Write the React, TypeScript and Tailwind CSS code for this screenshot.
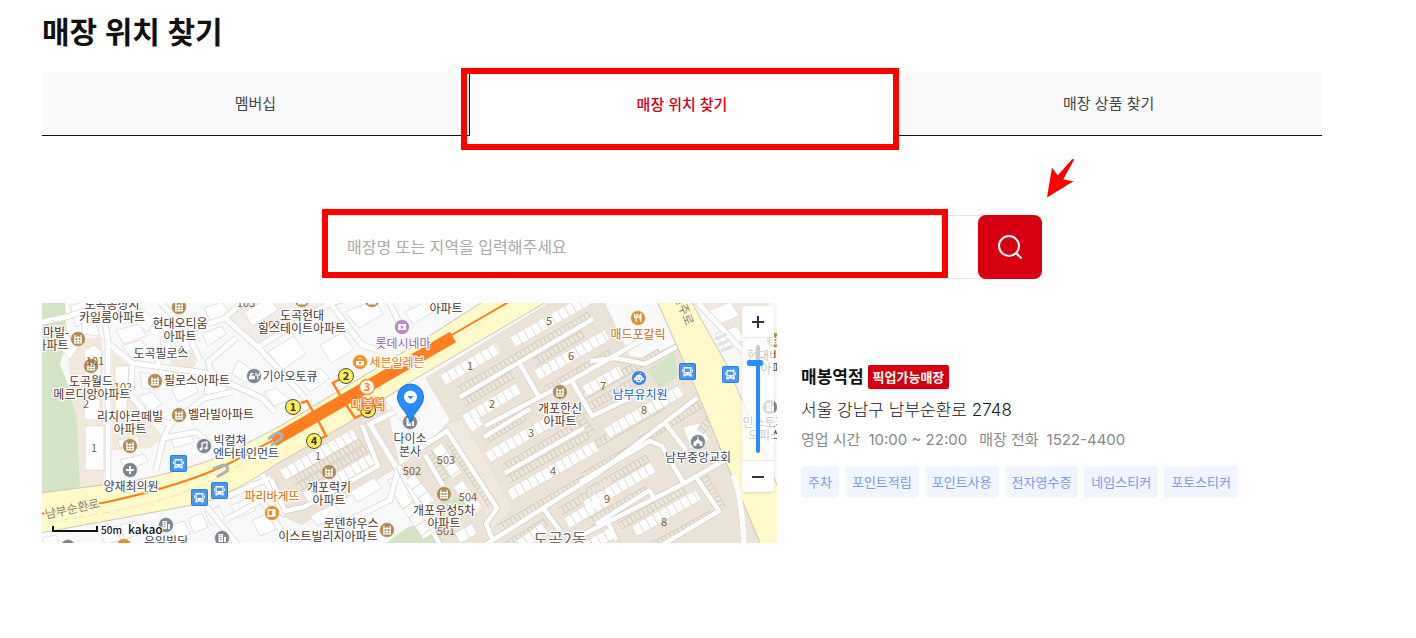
import { useState } from "react"

const tabs = ["멤버십", "매장 위치 찾기", "매장 상품 찾기"]

const services = [
  "주차",
  "포인트적립",
  "포인트사용",
  "전자영수증",
  "네임스티커",
  "포토스티커",
]

const tone = {
  apt: "#4a342b",
  place: "#3c4654",
  food: "#c66a00",
  orange: "#e9780c",
  purple: "#9067ad",
  blue: "#1b5fb8",
  num: "#7d6140",
  road: "#8a8078",
}

// [text, x, y (middle), colour]
const labels: [string, number, number, string][] = [
  ["도곡동상지", 112, 304, tone.apt],
  ["카일룸아파트", 112, 317, tone.apt],
  ["현대오티움", 180, 323, tone.apt],
  ["아파트", 180, 336, tone.apt],
  ["마빌-", 56, 332, tone.apt],
  ["아파트", 52, 345, tone.apt],
  ["도곡필로스", 161, 353, tone.place],
  ["도곡현대", 302, 315, tone.apt],
  ["힐스테이트아파트", 302, 328, tone.apt],
  ["필로스아파트", 197, 380, tone.apt],
  ["기아오토큐", 290, 376, tone.place],
  ["도곡월드", 91, 381, tone.apt],
  ["메르디앙아파트", 92, 394, tone.apt],
  ["리치아르떼빌", 130, 416, tone.apt],
  ["아파트", 130, 429, tone.apt],
  ["벨라빌아파트", 221, 414, tone.apt],
  ["빅컬쳐", 230, 440, tone.place],
  ["엔터테인먼트", 246, 453, tone.place],
  ["양재최의원", 131, 486, tone.place],
  ["유일빌딩", 166, 541, tone.place],
  ["롯데시네마", 403, 343, tone.purple],
  ["세븐일레븐", 397, 362, tone.orange],
  ["아파트", 446, 308, tone.apt],
  ["다이소", 410, 438, tone.place],
  ["본사", 410, 451, tone.place],
  ["개포럭키", 329, 487, tone.apt],
  ["아파트", 329, 500, tone.apt],
  ["파리바게뜨", 272, 496, tone.food],
  ["로덴하우스", 351, 523, tone.apt],
  ["이스트빌리지아파트", 328, 536, tone.apt],
  ["개포우성5차", 444, 510, tone.apt],
  ["아파트", 444, 523, tone.apt],
  ["개포한신", 560, 408, tone.apt],
  ["아파트", 560, 421, tone.apt],
  ["매드포갈릭", 638, 334, tone.food],
  ["남부유치원", 640, 394, tone.blue],
  ["남부중앙교회", 698, 457, tone.place],
  ["현대비체", 769, 355, tone.apt],
  ["아파트", 777, 368, tone.apt],
  ["인스토피아", 770, 422, tone.place],
  ["오피스텔", 770, 435, tone.place],
]

const numbers: [string, number, number][] = [
  ["105", 246, 303],
  ["102", 271, 325],
  ["101", 95, 361],
  ["102", 123, 387],
  ["2", 86, 404],
  ["1", 94, 448],
  ["4", 181, 350],
  ["1", 318, 456],
  ["1", 470, 366],
  ["2", 492, 404],
  ["3", 531, 433],
  ["4", 553, 471],
  ["5", 549, 321],
  ["6", 571, 356],
  ["7", 603, 386],
  ["8", 644, 410],
  ["9", 607, 499],
  ["8", 664, 522],
  ["503", 446, 460],
  ["502", 412, 471],
  ["504", 468, 497],
  ["501", 446, 531],
]

const aptPins = [
  [179, 307],
  [302, 300],
  [372, 300],
  [78, 339],
  [91, 366],
  [155, 381],
  [179, 415],
  [130, 446],
  [329, 472],
  [387, 530],
  [444, 494],
  [560, 392],
  [774, 340],
]

const buildingPins = [
  [166, 525],
  [222, 538],
  [68, 547],
  [410, 422],
  [770, 407],
]

const busStops = [
  [179, 464],
  [200, 498],
  [220, 491],
  [688, 372],
  [731, 375],
]

const exits = [
  ["3", 368, 410],
  ["1", 293, 407],
  ["2", 346, 376],
  ["4", 314, 441],
] as const

// apartment blocks, drawn as rows of cells
const blocks = [
  "M513 342L592 297",
  "M443 380L498 348",
  "M537 375L607 335",
  "M465 420L519 388",
  "M488 457L549 422",
  "M510 495L596 446",
  "M585 391L621 371",
  "M607 433L682 390",
  "M586 506L654 467",
  "M635 531L698 495",
  "M520 545L544 528",
  "M567 523L608 499",
  "M586 548L612 533",
  "M469 427L480 420",
  "M283 475L355 434",
  "M306 497L372 459",
]

const blocksSteep = [
  "M437 447L457 475",
  "M458 484L478 511",
  "M410 478L430 504",
  "M458 538L474 529",
  "M402 497L428 536",
]

const parking = [
  "M458 391L590 315",
  "M464 403L514 374",
  "M535 362L583 334",
  "M546 390L612 352",
  "M485 440L528 415",
  "M490 430L520 412",
  "M504 468L580 424",
  "M508 480L588 435",
  "M506 546L546 522",
  "M500 528L600 470",
  "M584 396L660 352",
  "M582 411L634 382",
  "M590 448L664 405",
  "M640 441L700 405",
  "M584 476L650 438",
  "M588 492L648 458",
  "M590 522L648 489",
  "M560 512L612 481",
  "M620 526L684 489",
  "M700 470L722 508",
  "M655 545L712 514",
  "M572 405L592 434",
  "M293 481L362 441",
  "M298 488L368 448",
  "M428 452L446 479",
  "M450 442L492 506",
  "M700 432L714 414",
]

const estateRoads = [
  "M460 397L593 319",
  "M520 364L540 399",
  "M485 426L538 398L572 380L640 341",
  "M590 361L615 358L645 364L680 345",
  "M572 381L592 416L630 398",
  "M484 437L530 409",
  "M505 473L584 428",
  "M417 450L447 431L497 508L486 524L493 541",
  "M482 547L600 472L697 398",
  "M665 423L686 450",
  "M580 482L650 441L662 446L684 484",
  "M580 536L683 484L730 457",
  "M543 508L560 531",
  "M596 524L650 490",
  "M650 490L654 500",
  "M608 522L616 540",
  "M696 477L719 511L662 545",
  "M271 479L285 511L304 507L378 466L362 425",
  "M398 466L440 545",
  "M425 455L443 486",
]

const cityRoads = [
  "M102 300L108 342L108 485",
  "M108 343L132 363L206 373L262 398L275 412",
  "M132 366L131 396L150 418L170 424",
  "M236 338L208 362L212 373L230 384",
  "M160 345L158 365",
  "M42 322L66 317L102 305",
  "M160 302L186 330L200 360",
  "M225 318L258 347L305 398",
  "M258 347L330 303L360 296",
  "M190 330L225 318L245 300",
  "M170 424L163 440L156 470",
  "M170 424L205 398L232 392",
  "M164 438L196 432L212 445",
  "M330 303L362 345L384 352",
  "M388 300L404 332",
  "M225 520L262 500L292 548",
  "M206 506L240 548",
  "M270 478L226 497",
  "M262 474L284 515",
  "M394 412L370 424L398 470",
  "M300 545L390 500L398 470",
  "M698 303L742 350L777 370",
]

const houses = [
  "M70 306l16 -5 8 18 -18 8z",
  "M64 332l16 12 -10 16 -8 -10z",
  "M82 320l14 4 4 12 -18 -2z",
  "M118 308l18 -2 4 14 -18 4z",
  "M116 330l24 -6 6 12 -22 8z",
  "M142 308l12 12 -6 12 -12 -8z",
  "M122 346l20 -6 6 12 -16 6z",
  "M160 340l10 -4 2 24 -10 -2z",
  "M204 308l18 -6 8 12 -18 10z",
  "M202 334l20 -8 4 8 -18 12z",
  "M140 372l20 4 -2 14 -16 -2z",
  "M172 390l22 -10 4 12 -20 10z",
  "M138 396l14 -4 10 12 -12 8z",
  "M206 380l22 8 -6 8 -18 -2z",
  "M120 460l24 -6 4 8 -22 8z",
  "M118 440l20 -4 2 8 -20 4z",
  "M170 436l20 -4 4 10 -20 6z",
  "M244 312l26 -14 8 12 -26 16z",
  "M268 352l26 -16 12 18 -24 16z",
  "M300 380l20 -12 10 10 -20 14z",
  "M320 345l22 -12 12 16 -22 14z",
  "M345 312l30 -12 8 14 -24 14z",
  "M405 312l20 -10 8 10 -20 12z",
  "M238 360l14 10 -6 12 -14 -8z",
  "M290 400l-14 -12 -12 4 10 14z",
  "M170 526l14 -5 6 13 -14 6z",
  "M188 519l14 -6 6 14 -14 6z",
  "M205 512l14 -6 6 13 -14 6z",
  "M100 530l16 -4 5 14 -16 4z",
  "M120 525l16 -4 5 13 -16 5z",
  "M42 538l14 -3 4 12 -16 3z",
  "M230 506l20 -8 6 12 -18 8z",
  "M252 520l20 -8 8 16 -20 8z",
  "M222 480l24 -10 8 12 -22 10z",
  "M350 492l24 -14 8 10 -24 14z",
  "M310 516l24 -12 8 10 -24 12z",
  "M388 480l12 -5 14 26 -14 6z",
  "M384 398l16 -8 20 30 -14 8z",
  "M705 312l26 -10 8 14 -24 10z",
  "M715 334l22 -8 8 14 -20 8z",
]

function AptIcon({ x, y }: { x: number; y: number }) {
  return (
    <g transform={`translate(${x} ${y})`}>
      <circle r="7.5" fill="#ad8c58" stroke="#fff" strokeWidth="0.6" />
      <path
        d="M-4 -1.5h8M-4 1.5h8M-4 3.8h8M-3 -4v8M0 -3v7M3 -4v8"
        stroke="#fff"
        strokeWidth="1.2"
        fill="none"
      />
    </g>
  )
}

function BuildingIcon({ x, y }: { x: number; y: number }) {
  return (
    <g transform={`translate(${x} ${y})`}>
      <circle r="7.5" fill="#7d858f" stroke="#fff" strokeWidth="0.6" />
      <path d="M-3.5 4V-4h4.5v8zM2 4V-1h2v5z" fill="#fff" />
      <path
        d="M-2.3 -2.3h2.2M-2.3 -0.3h2.2M-2.3 1.7h2.2"
        stroke="#7d858f"
        strokeWidth="0.8"
      />
    </g>
  )
}

function BusIcon({ x, y }: { x: number; y: number }) {
  return (
    <g transform={`translate(${x - 0.5} ${y - 0.5})`}>
      <rect
        x="-8"
        y="-8"
        width="16"
        height="16"
        rx="1"
        fill="#4a97f2"
        stroke="#2f7cdc"
      />
      <path d="M-4 -4.5h8v8.500h-8z" fill="#fff" />
      <path d="M-4 3h2v2h-2zM2 3h2v2h-2z" fill="#fff" />
      <path d="M-5 -2v2.500M5 -2v2.500" stroke="#fff" strokeWidth="1" />
      <path
        d="M-2.800 -3h5.600v3.500h-5.600zM-3 1.800h1.500v1h-1.500zM1.500 1.800h1.500v1h-1.500z"
        fill="#4a97f2"
      />
    </g>
  )
}

function MapDrawing() {
  return (
    <svg
      className="block h-full w-full"
      viewBox="42 303 735 240"
      preserveAspectRatio="xMidYMid slice"
      fontFamily="'Noto Sans CJK KR', sans-serif"
      role="img"
      aria-label="매봉역점 지도"
    >
      <rect x="42" y="303" width="735" height="240" fill="#f9f9f9" />

      {/* estates */}
      <g fill="#ebe3d8">
        <path d="M68 358L84 339L102 337L104 486L80 489L76 420z" fill="#f2e9de" />
        <path d="M112 352L131 367L131 396L150 420L163 438L150 448L112 450z" fill="#f2e9de" />
        <path d="M170 350h26v14l-8 10h-16z" fill="#f2e9de" />
        <path d="M225 316L244 303H340L258 345z" fill="#f2ede6" />
        <path d="M262 470L386 402L400 466L302 525L278 515z" />
        <path d="M425 378L548 303H658L762 543H440L396 468L420 450L450 420z" />
      </g>
      <path d="M605 303H658L675 344L645 358L630 356L618 330z" fill="#fafafa" />
      <path d="M692 303H770L742 345z" fill="#f1e8dd" />
      <path d="M447 424L462 420L512 508L492 528z" fill="#f2e9de" />

      {/* parks */}
      <g fill="#d2e4c5">
        <path d="M42 303H65L67 340L60 364L70 390L77 420L80 487L42 494z" />
        <path d="M647 370L675 352L677 377L660 388z" />
        <path d="M386 543L408 527L434 521L444 543z" />
        <path d="M440 502L462 497L468 505L450 512z" />
      </g>

      <g fill="#fff" stroke="#e1e1e1" strokeWidth="1">
        {houses.map((d) => (
          <path key={d} d={d} />
        ))}
        <path d="M84 350l10 -5 8 6 -2 38 -14 2z" stroke="#e8ddd0" />
        <path d="M84 398h16v22h-16zM85 426h19v44h-19z" stroke="#e8ddd0" />
        <path d="M115 366h14v26h-14zM115 398h12v20h-12z" stroke="#e8ddd0" />
        <path d="M683 427l16 -4 11 17 -19 9z" stroke="#e8ddd0" />
      </g>

      <g fill="none" stroke="#d9d7d4" strokeWidth="6.500">
        {cityRoads.map((d) => (
          <path key={d} d={d} />
        ))}
      </g>
      <g fill="none" stroke="#fff" strokeWidth="5">
        {cityRoads.map((d) => (
          <path key={d} d={d} />
        ))}
      </g>

      <g fill="none" stroke="#d3cabc" strokeWidth="8">
        {parking.map((d) => (
          <path key={d} d={d} />
        ))}
      </g>
      <g fill="none" stroke="#ece5da" strokeWidth="6.500" strokeDasharray="3.600 1">
        {parking.map((d) => (
          <path key={d} d={d} />
        ))}
      </g>
      <g fill="none" stroke="#d2cbc1" strokeWidth="6">
        {estateRoads.map((d) => (
          <path key={d} d={d} strokeLinejoin="round" />
        ))}
      </g>
      <g fill="none" stroke="#fff" strokeWidth="4.600">
        {estateRoads.map((d) => (
          <path key={d} d={d} strokeLinejoin="round" />
        ))}
      </g>
      <g fill="none" stroke="#ddd5ca" strokeWidth="12">
        {blocks.map((d) => (
          <path key={d} d={d} />
        ))}
        {blocksSteep.map((d) => (
          <path key={d} d={d} />
        ))}
      </g>
      <g fill="none" stroke="#fff" strokeWidth="11">
        {blocks.map((d) => (
          <path key={d} d={d} strokeDasharray="7 0.800" />
        ))}
        {blocksSteep.map((d) => (
          <path key={d} d={d} strokeDasharray="10 0.800" />
        ))}
      </g>

      {/* main roads */}
      <g fill="#fffaca" stroke="#cfc4b6" strokeWidth="1">
        <path d="M40 493L133 481Q180 472 225 455L282 425L415 345L484 301H548L410 382L348 423L275 465Q240 490 203 503L117 519L40 533z" />
        <path d="M657 301H691L728 367L742 400L779 490V545H761L728 467L695 387z" />
      </g>
      <path
        d="M733 475Q742 495 744 545"
        fill="none"
        stroke="#fff"
        strokeWidth="5"
      />
      <path
        d="M33 525L110 512Q188 497 228 472L483 322"
        fill="none"
        stroke="#f5e9a8"
        strokeWidth="1"
        strokeDasharray="10 4"
      />
      <path
        d="M715 339l12 -5M718 345l12 -5M721 351l12 -5"
        stroke="#e2e2e2"
        strokeWidth="3"
      />

      {/* subway line */}
      <g fill="none" stroke="#ff7f20">
        <path
          d="M40 514L107 502Q185 485 230 463L285 434L450 336L512 300"
          strokeWidth="2"
        />
        <path d="M273 441L453 337" strokeWidth="12" />
        <path
          d="M301 403l6 -2l14 25l5 10l-8 4M344 377l-11 6l8 14M345 403l10 15l8 -4"
          strokeWidth="2.500"
        />
      </g>

      <g fill="none" stroke="#aeb0b2" strokeWidth="3">
        <path d="M213 469l10 -4q6 0 4 6l-10 6M268 439l9 -6q7 0 4 6l-10 6" />
      </g>

      {aptPins.map(([x, y]) => (
        <AptIcon key={`${x}-${y}`} x={x} y={y} />
      ))}
      {buildingPins.map(([x, y]) => (
        <BuildingIcon key={`${x}-${y}`} x={x} y={y} />
      ))}
      {busStops.map(([x, y]) => (
        <BusIcon key={`${x}-${y}`} x={x} y={y} />
      ))}

      {/* car repair, music, clinic, church */}
      <g fill="#7d858f" stroke="#fff" strokeWidth="0.600">
        <circle cx="254" cy="376" r="7.500" />
        <circle cx="204" cy="446" r="7.500" />
        <circle cx="130" cy="470" r="7.500" />
        <circle cx="698" cy="442" r="7.500" />
      </g>
      <path d="M249.500 376h5v3h-5zM250.500 376v-2.500h3" fill="#fff" stroke="#fff" strokeWidth="0.800" />
      <path d="M256 372.500v2.500h3.500v-2.500M257.700 375v4.500" fill="none" stroke="#fff" strokeWidth="1.200" />
      <path d="M202 449v-6l5 -1v6" fill="none" stroke="#fff" strokeWidth="1.300" />
      <g fill="#fff">
        <circle cx="201" cy="449" r="1.600" />
        <circle cx="206" cy="448" r="1.600" />
        <path d="M129 466h2v3h3v2h-3v3h-2v-3h-3v-2h3z" />
        <path d="M697.500 436.500h1v2.500l2.500 2.500h1.500v4.500h-3v-2.500h-3v2.500h-3v-4.500h1.500l2.500 -2.500z" />
      </g>

      {/* shops */}
      <g stroke="#fff" strokeWidth="0.600">
        <circle cx="360" cy="362" r="7.500" fill="#f7932f" />
        <circle cx="272" cy="513" r="7.500" fill="#da9234" />
        <circle cx="638" cy="318" r="7.500" fill="#da9234" />
        <circle cx="124" cy="546" r="7.500" fill="#da9234" />
        <circle cx="402" cy="327" r="7.500" fill="#b78ac0" />
        <circle cx="639" cy="378" r="7.500" fill="#3f86dd" />
      </g>
      <path d="M356 361h8v4.500h-8zM357.500 359l2.500 -1.500 2.500 1.500z" fill="#fff" />
      <circle cx="360" cy="363" r="1.200" fill="#f7932f" />
      <path d="M268 510h7v6h-7z" fill="none" stroke="#fff" strokeWidth="1.300" />
      <path d="M272 510h3v6h-3z" fill="#fff" />
      <path d="M634.500 314v3.500h3.500v-3.500M636.200 314v8M641 322v-8q-2 2 -1 5h1" fill="none" stroke="#fff" strokeWidth="1.200" />
      <path d="M398 324h8v6h-8z" fill="#fff" />
      <path d="M402 325l.7 1.500 1.600 .1 -1.300 1 .5 1.500 -1.500 -.8 -1.500 .8 .5 -1.500 -1.300 -1 1.600 -.1z" fill="#b78ac0" />
      <path d="M639 374.500q1 -1.500 2 -1" fill="none" stroke="#fff" strokeWidth="1" />
      <circle cx="639" cy="378.500" r="3.800" fill="#fff" />
      <path d="M635 379h-1M643 379h1" stroke="#fff" strokeWidth="2" />
      <path d="M637.500 377.500v1M640.500 377.500v1M637.500 380.500h3" stroke="#3f86dd" strokeWidth="1" />

      {/* station */}
      <g fontSize="11" fontWeight="700" textAnchor="middle">
        {exits.map(([n, x, y]) => (
          <g key={n}>
            <circle
              cx={x}
              cy={y}
              r="7.500"
              fill="#ffee58"
              stroke="#4d4937"
              strokeWidth="1"
            />
            <text x={x} y={y + 4} fill="#333">
              {n}
            </text>
          </g>
        ))}
        <circle cx="367" cy="387" r="7.500" fill="#fff" stroke="#ff8a35" strokeWidth="1.300" />
        <text x="367" y="391" fill="#ff7f20">
          3
        </text>
      </g>

      <g fontSize="11" fill={tone.num} textAnchor="middle">
        {numbers.map(([text, x, y]) => (
          <text key={`${text}-${x}`} x={x} y={y + 4}>
            {text}
          </text>
        ))}
      </g>

      <g
        fontSize="12"
        textAnchor="middle"
        stroke="#fff"
        strokeWidth="2.500"
        strokeLinejoin="round"
        paintOrder="stroke"
      >
        {labels.map(([text, x, y, fill]) => (
          <text key={`${text}-${x}-${y}`} x={x} y={y + 5} fill={fill}>
            {text}
          </text>
        ))}
        <text x="368" y="409" fill="#fff" stroke="#f57a1c">
          매봉역
        </text>
        <text
          transform="translate(73 513) rotate(-12)"
          fill={tone.road}
          stroke="#fffaca"
        >
          남부순환로
        </text>
        <text
          transform="translate(680 311) rotate(68)"
          fill={tone.road}
          stroke="#fffaca"
        >
          선주로
        </text>
        <text x="560" y="545" fontSize="16" fill="#6d6a67">
          도곡2동
        </text>
      </g>

      {/* store marker */}
      <path
        d="M410.500 423C408 412 397.500 407 397.500 397A13 13 0 0 1 423.500 397C423.500 407 413 412 410.500 423z"
        fill="#258fff"
        stroke="#1a6fd0"
        strokeWidth="1"
      />
      <circle cx="410.500" cy="397" r="6.500" fill="#fff" />
      <path d="M407.500 396h6l-3 3.500z" fill="#258fff" />

      {/* scale and copyright */}
      <path d="M53 526v5h44v-5" fill="none" stroke="#111" strokeWidth="2" />
      <g fontWeight="500" fill="#111" stroke="#fff" strokeWidth="1.500" paintOrder="stroke">
        <text x="101" y="534" fontSize="10">
          50m
        </text>
        <text x="128" y="534" fontSize="12">
          kakao
        </text>
      </g>
    </svg>
  )
}

function ZoomControl() {
  const [level, setLevel] = useState(12)

  return (
    <div className="absolute right-[3px] top-[3px] flex w-8 flex-col items-center rounded-sm bg-white/70 shadow">
      <button
        type="button"
        aria-label="확대"
        className="flex h-8 w-8 items-center justify-center rounded-t-sm border-b border-gray-200 bg-white"
        onClick={() => setLevel(Math.min(14, level + 1))}
      >
        <svg className="h-3 w-3" viewBox="0 0 12 12" stroke="#333" strokeWidth={2}>
          <path d="M0 6h12M6 0v12" />
        </svg>
      </button>
      <div className="flex py-[7px]">
        <input
          type="range"
          aria-label="지도 확대 수준"
          min={0}
          max={14}
          value={level}
          onChange={(e) => setLevel(Number(e.target.value))}
          className="h-[108px] w-1 cursor-pointer appearance-none rounded-full bg-[linear-gradient(#ccc_18px,#258fff_18px)] [direction:rtl] [writing-mode:vertical-lr] [&::-webkit-slider-thumb]:-ml-1.5 [&::-webkit-slider-thumb]:h-1.5 [&::-webkit-slider-thumb]:w-4 [&::-webkit-slider-thumb]:appearance-none [&::-webkit-slider-thumb]:rounded-xs [&::-webkit-slider-thumb]:bg-[#258fff]"
        />
      </div>
      <button
        type="button"
        aria-label="축소"
        className="flex h-8 w-8 items-center justify-center rounded-b-sm border-t border-gray-200 bg-white"
        onClick={() => setLevel(Math.max(0, level - 1))}
      >
        <svg className="h-3 w-3" viewBox="0 0 12 12" stroke="#333" strokeWidth={2}>
          <path d="M0 6h12" />
        </svg>
      </button>
    </div>
  )
}

export default function App() {
  const [keyword, setKeyword] = useState("")

  return (
    <main className="min-h-screen bg-white pb-24 pl-[42px] pr-[94px] pt-2 font-['Inter','Noto_Sans_CJK_KR',sans-serif] text-[#111]">
      <h1 className="text-[30px] font-semibold leading-[48px]">
        매장 위치 찾기
      </h1>

      <nav className="mt-4 grid grid-cols-3 text-[15px]">
        {tabs.map((tab, i) =>
          i === 1 ? (
            <a
              key={tab}
              href="#store"
              aria-current="page"
              className="relative flex h-16 items-center justify-center border-x border-[#111] pt-0.5 font-medium text-[#d70011]"
            >
              {tab}
              <span className="pointer-events-none absolute -bottom-[14px] -left-[9px] -right-[5px] -top-1 border-6 border-[#ff0000]" />
            </a>
          ) : (
            <a
              key={tab}
              href="#tab"
              className="flex h-16 items-center justify-center border-b border-[#111] bg-[#fafafa] pt-0.5 text-[#444]"
            >
              {tab}
            </a>
          )
        )}
      </nav>

      <form
        className="relative mx-auto mt-[79px] flex max-w-[720px]"
        onSubmit={(e) => e.preventDefault()}
      >
        <input
          type="text"
          aria-label="매장 검색"
          placeholder="매장명 또는 지역을 입력해주세요"
          value={keyword}
          onChange={(e) => setKeyword(e.target.value)}
          className="-mr-2 h-16 min-w-0 flex-1 rounded-l-lg border border-[#e5e5e5] pl-6 pr-8 text-[16px] placeholder:text-[#aaa]"
        />
        <button
          type="submit"
          aria-label="검색"
          className="relative flex h-16 w-16 items-center justify-center rounded-lg bg-[#d70011]"
        >
          <svg
            className="h-6 w-6"
            viewBox="0 0 24 24"
            fill="none"
            stroke="#fff"
            strokeWidth={2}
          >
            <circle cx="11" cy="11" r="10" />
            <path d="M18.300 18.300L23.500 23.500" />
          </svg>
        </button>
        <span className="pointer-events-none absolute -top-1.5 bottom-px left-0 right-[94px] border-6 border-[#ff0000]" />
        <svg
          className="pointer-events-none absolute -right-[34px] -top-[57px] h-10 w-[30px]"
          viewBox="0 0 30 40"
          fill="#ff0000"
        >
          <path d="M1 39.500L6 9.500L11.700 17.500L26 1.200Q28 0.800 27.700 2.500L17.200 21.500L27.500 23.300z" />
        </svg>
      </form>

      <section className="mt-6 flex gap-6">
        <div className="relative h-60 min-w-0 flex-1 overflow-hidden">
          <MapDrawing />
          <ZoomControl />
        </div>

        <div className="w-[521px] shrink-0 pt-[62px]">
          <div className="flex items-center gap-1">
            <h2 className="text-[17px] font-semibold leading-6">매봉역점</h2>
            <span className="rounded-xs bg-[#d70011] px-[5px] text-[13px] font-semibold leading-6 text-white">
              픽업가능매장
            </span>
          </div>
          <p className="mt-2 text-[17px] font-light leading-[26px]">
            서울 강남구 남부순환로 2748
          </p>
          <dl className="mt-1.5 flex text-[15px] leading-[22px] text-[#888]">
            <dt>영업 시간</dt>
            <dd className="ml-2">10:00 ~ 22:00</dd>
            <dt className="ml-3">매장 전화</dt>
            <dd className="ml-2">1522-4400</dd>
          </dl>
          <ul className="mt-[15px] flex flex-wrap gap-1.5 text-[13px] leading-8 text-[#7b98ea]">
            {services.map((service) => (
              <li key={service} className="rounded bg-[#f0f5ff] px-[7px]">
                {service}
              </li>
            ))}
          </ul>
        </div>
      </section>
    </main>
  )
}
